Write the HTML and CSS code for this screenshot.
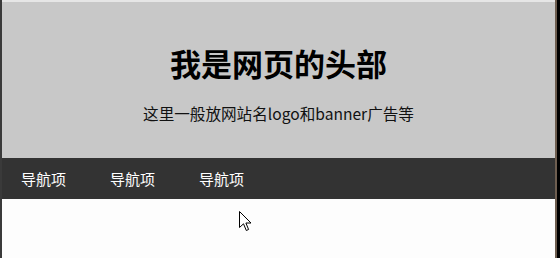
FILE: index.html
```html
<!DOCTYPE html>
<html lang="zh">
<head>
<meta charset="utf-8">
<title>页面</title>
<link rel="stylesheet" href="styles.css">
</head>
<body>
<div class="frame">
  <div class="edge-left"></div>
  <div class="page">
    <div class="top-line"></div>
    <header class="header">
      <h1 class="title">我是网页的头部</h1>
      <p class="subtitle">这里一般放网站名logo和banner广告等</p>
    </header>
    <nav class="nav">
      <a class="nav-item">导航项</a>
      <a class="nav-item">导航项</a>
      <a class="nav-item">导航项</a>
    </nav>
    <main class="content"></main>
  </div>
  <div class="edge-right"></div>
  <div class="edge-black"></div>
</div>
<svg class="cursor" width="14" height="22" viewBox="0 0 14 22">
  <path d="M0.5 0.5 L0.5 16.5 L4.5 12.8 L7.3 19.5 L9.6 18.5 L6.9 12 L12 12 Z" fill="#fff" stroke="#000" stroke-width="1" stroke-linejoin="miter"/>
</svg>
</body>
</html>
```
FILE: styles.css
```css
html, body {
  margin: 0;
  padding: 0;
  width: 560px;
  height: 258px;
  overflow: hidden;
  font-family: "Noto Sans CJK SC", "Noto Sans", sans-serif;
}
.frame {
  display: flex;
  height: 258px;
}
.edge-left {
  width: 2px;
  background: #3a3a3a;
}
.page {
  flex: 1;
  display: flex;
  flex-direction: column;
  background: #fdfdfd;
}
.top-line {
  height: 2px;
  background: #e6e6e6;
}
.header {
  height: 156px;
  background: #c8c8c8;
  text-align: center;
  box-sizing: border-box;
  padding-top: 41px;
}
.title {
  margin: 0;
  font-size: 31px;
  line-height: 40px;
  font-weight: 700;
  color: #000;
}
.subtitle {
  margin: 18px 0 0;
  font-size: 15.6px;
  line-height: 24px;
  color: #111;
}
.nav {
  height: 41px;
  background: #333333;
  display: flex;
  align-items: center;
}
.nav-item {
  padding: 0 22px 0 19px;
  color: #fff;
  font-size: 15px;
  line-height: 20px;
  width: 48px;
}
.content {
  flex: 1;
}
.edge-right {
  width: 2px;
  background: #6e5e50;
}
.edge-black {
  width: 3px;
  background: #000;
}
.cursor {
  position: absolute;
  left: 238.5px;
  top: 210.5px;
}
```
